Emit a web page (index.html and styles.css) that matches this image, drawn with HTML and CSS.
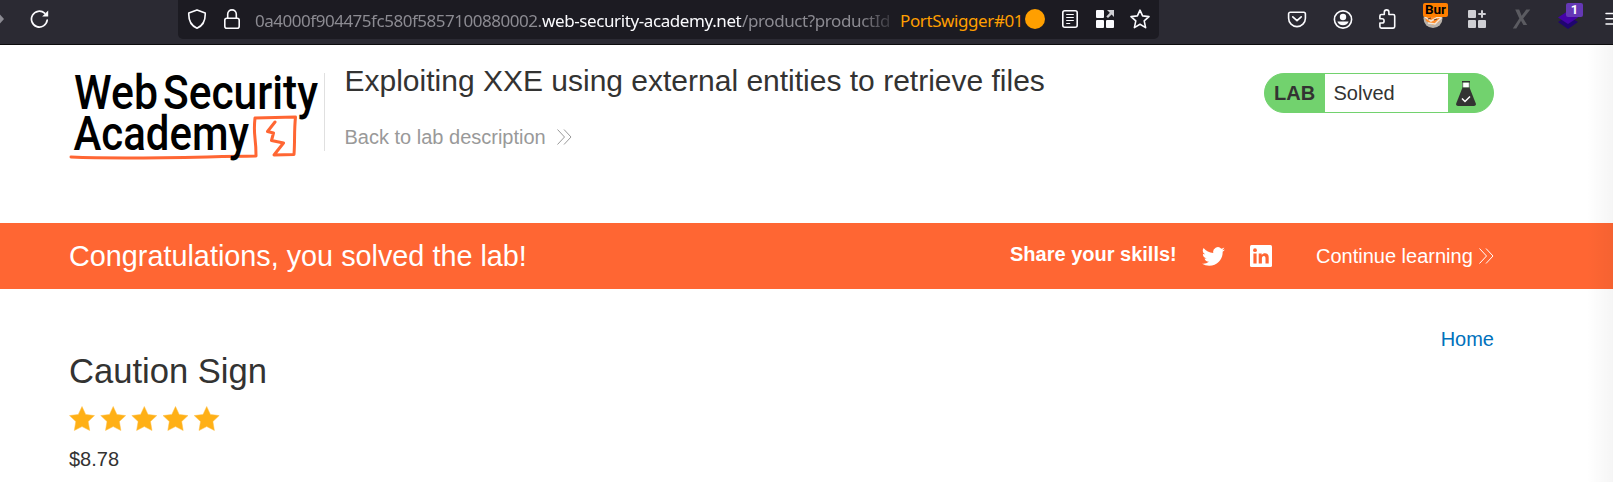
FILE: index.html
```html
<!DOCTYPE html>
<html lang="en">
<head>
<meta charset="utf-8">
<title>Exploiting XXE using external entities to retrieve files</title>
<link rel="stylesheet" href="styles.css">
</head>
<body>
<div class="toolbar">
  <svg class="icon nub" viewBox="0 0 5 20"><path d="M0 5.5L4 10L0 14.5Z" fill="#8b8a92"/></svg>
  <svg class="icon reload" viewBox="0 0 20 20"><path d="M17.2 11.2A7.9 7.9 0 1 1 14.6 4.2" fill="none" stroke="#fbfbfe" stroke-width="1.7" stroke-linecap="round"/><path d="M18.2 1.4V7.4H12.2Z" fill="#fbfbfe"/></svg>
  <div class="urlbar">
    <svg class="icon shield" viewBox="0 0 20 20"><path d="M10 .9L18.2 3.9C18.6 11.500 15.200 17 10 19.200C4.800 17 1.400 11.500 1.800 3.900Z" fill="none" stroke="#fbfbfe" stroke-width="1.600" stroke-linejoin="round"/></svg>
    <svg class="icon lock" viewBox="0 0 20 20"><rect x="2.800" y="9.200" width="14.400" height="10" rx="2" fill="none" stroke="#fbfbfe" stroke-width="1.600"/><path d="M5.700 9V5.200a4.300 4.300 0 0 1 8.600 0V9" fill="none" stroke="#fbfbfe" stroke-width="1.600"/></svg>
    <div class="url"><span class="sub">0a4000f904475fc580f5857100880002.</span><span class="domain">web-security-academy.net</span><span class="path">/product?productId</span></div>
    <span class="container-name">PortSwigger#01</span>
    <span class="container-dot"></span>
    <svg class="icon reader" viewBox="0 0 20 20"><rect x="2.800" y="1.800" width="14.400" height="16.400" rx="2" fill="none" stroke="#fbfbfe" stroke-width="1.600"/><path d="M6.200 5.500h7.600M6.200 8.500h7.600M6.200 11.500h7.600M6.200 14.500h4" stroke="#fbfbfe" stroke-width="1.200"/></svg>
    <svg class="icon apps" viewBox="0 0 20 20"><g fill="#fbfbfe"><rect x="1" y="1" width="8" height="8" rx="1"/><rect x="1" y="11" width="8" height="8" rx="1"/><rect x="11" y="11" width="8" height="8" rx="1"/></g><path d="M12 1H19V8L16.600 5.600L13 9L11.300 7.400L14.800 3.800Z" fill="#cfcfd4"/></svg>
    <svg class="icon bookmark" viewBox="0 0 20 20"><path d="M10 1.200L12.600 6.900L19 7.600L14.200 11.900L15.600 18.600L10 15.300L4.400 18.600L5.800 11.900L1 7.600L7.400 6.900Z" fill="none" stroke="#fbfbfe" stroke-width="1.600" stroke-linejoin="round"/></svg>
  </div>
  <svg class="icon pocket" viewBox="0 0 20 20"><path d="M3.300 3.200h13.400a1.700 1.700 0 0 1 1.700 1.700v4.300a8.400 8.400 0 0 1-16.800 0V4.900a1.700 1.700 0 0 1 1.700-1.700Z" fill="none" stroke="#fbfbfe" stroke-width="1.600"/><path d="M5.800 7.800L10 11.700L14.200 7.800" fill="none" stroke="#fbfbfe" stroke-width="1.700" stroke-linecap="round" stroke-linejoin="round"/></svg>
  <svg class="icon account" viewBox="0 0 20 20"><circle cx="10" cy="10.500" r="8.600" fill="none" stroke="#fbfbfe" stroke-width="1.600"/><circle cx="10" cy="8" r="3.200" fill="#fbfbfe"/><path d="M4.400 12.600H15.600C15 15 12.800 16.200 10 16.200S5 15 4.400 12.600Z" fill="#fbfbfe"/></svg>
  <svg class="icon puzzle" viewBox="0 0 20 20"><path d="M7.300 5.500V3.200a2.300 2.300 0 0 1 4.600 0V5.500H16.200a1.500 1.500 0 0 1 1.500 1.500V17.600a1.500 1.500 0 0 1-1.500 1.500H4.400A1.500 1.500 0 0 1 2.900 17.600V14H5a2.100 2.100 0 0 0 0-4.200H2.900V7A1.500 1.500 0 0 1 4.400 5.500Z" fill="none" stroke="#fbfbfe" stroke-width="1.600" stroke-linejoin="round"/></svg>
  <div class="burp">
    <svg viewBox="0 0 20 20"><circle cx="10" cy="9.500" r="9.500" fill="#b9b2aa"/><path d="M2 6H18L16 13L10 16L3 12Z" fill="#ff8c2a"/><path d="M2 8L8 12L15 8L18 9L12 15L5 14" fill="none" stroke="#f3e6d7" stroke-width="1.500"/><path d="M5 10L8 9M11 11L14 10" stroke="#6a4325" stroke-width="1.300"/></svg>
    <span class="badge bur">Bur</span>
  </div>
  <svg class="icon ext" viewBox="0 0 20 20"><g fill="#cfcfd4"><rect x="1" y="1" width="8" height="8" rx="1"/><rect x="1" y="11" width="8" height="8" rx="1"/><rect x="11" y="11" width="8" height="8" rx="1"/></g><path d="M15 1.300V8.700M11.300 5H18.700" stroke="#cfcfd4" stroke-width="2"/></svg>
  <svg class="icon xext" viewBox="0 0 20 20"><path d="M3.200 .5H7.200L9.600 6.800L14.300 .5H18.300L11.200 9.500L15.200 16H11.400L9 11.800L4.300 19.500H.8L7.300 9.500Z" fill="#5b5b61"/></svg>
  <div class="layers">
    <svg viewBox="0 0 20 17"><path d="M0 10L10 4L20 10L10 17Z" fill="#1f0570"/><path d="M0 5.500L10 -1L20 5.500L10 12Z" fill="#4503a8"/></svg>
    <span class="badge count">1</span>
  </div>
  <svg class="icon menu" viewBox="0 0 9 20"><path d="M1 4.500H9M1 9.700H9M1 15H9" stroke="#fbfbfe" stroke-width="1.500" stroke-linecap="round"/></svg>
</div>

<div class="page">
  <header class="lab-header">
    <svg class="logo" viewBox="0 0 256 96" width="256" height="96">
      <g class="logo-text">
        <text x="5" y="43" textLength="84" lengthAdjust="spacingAndGlyphs">Web</text>
        <text x="94" y="43" textLength="155" lengthAdjust="spacingAndGlyphs">Security</text>
      </g>
      <path d="M2 91C60 93.500 120 91 187 90L187 89C187 70 184 70 186 52L226.500 51C225 65 226 75 225 88.500L205 89L214.500 77L202.500 74.500L204.500 67L198.500 65.500L206 56" fill="none" stroke="#ff6633" stroke-width="3" stroke-linejoin="round" stroke-linecap="round"/>
      <text class="logo-text" x="4.500" y="84" textLength="175.500" lengthAdjust="spacingAndGlyphs">Academy</text>
    </svg>
    <div class="title-block">
      <h2>Exploiting XXE using external entities to retrieve files</h2>
      <a class="back">Back to lab description <svg class="chev" viewBox="0 0 15 16"><path d="M.5 .5L7.500 8L.5 15.500M7 .5L14 8L7 15.500" fill="none" stroke="currentColor"/></svg></a>
    </div>
    <div class="status">
      <span class="lab">LAB</span>
      <span class="solved">Solved</span>
      <svg class="flask" viewBox="0 0 20 25"><path d="M6.500 1.500V6.500H13.500V1.500Z" fill="#fff"/><path d="M6 .7H14" stroke="#333332" stroke-width="1.400"/><path d="M6.700 1V7M13.300 1V7" stroke="#333332" stroke-width=".7"/><path d="M6.500 6.500H13.500L19.800 22.500Q20.200 25 18 25H2Q-.2 25 .2 22.500Z" fill="#333332"/><path d="M6 17.500L9 20.500L14 15.500" fill="none" stroke="#fff" stroke-width="1.500"/></svg>
    </div>
  </header>

  <section class="banner">
    <span class="congrats">Congratulations, you solved the lab!</span>
    <span class="share">Share your skills!</span>
    <svg class="twitter" viewBox="0 0 24 24"><path fill="#fff" d="M23.950 4.570a10 10 0 0 1-2.820.780 4.960 4.960 0 0 0 2.160-2.730c-.950.560-2 .960-3.130 1.190a4.920 4.920 0 0 0-8.380 4.480C7.690 8.090 4.070 6.130 1.640 3.160a4.900 4.900 0 0 0 1.520 6.570 4.900 4.900 0 0 1-2.230-.610v.060a4.920 4.920 0 0 0 3.950 4.830 5 5 0 0 1-2.210.080 4.940 4.940 0 0 0 4.600 3.420A9.870 9.870 0 0 1 0 19.540a13.990 13.990 0 0 0 7.550 2.210c9.050 0 14-7.500 14-13.980 0-.210 0-.420-.020-.630a9.940 9.940 0 0 0 2.420-2.570Z"/></svg>
    <svg class="linkedin" viewBox="0 0 22 22"><rect width="22" height="22" rx="1.500" fill="#fff"/><g fill="#ff6633"><circle cx="5" cy="5.200" r="1.900"/><path d="M3.400 8.500H6.600V18.500H3.400ZM8.700 8.500H11.700V9.900C12.500 8.700 13.600 8.200 15 8.200C17.800 8.200 18.700 10 18.700 12.700V18.500H15.500V13.300C15.500 11.800 15.200 10.900 13.900 10.900C12.500 10.900 11.900 11.900 11.900 13.300V18.500H8.700Z"/></g></svg>
    <a class="continue">Continue learning <svg class="chev" viewBox="0 0 15 16"><path d="M.5 .5L7.500 8L.5 15.500M7 .5L14 8L7 15.500" fill="none" stroke="currentColor"/></svg></a>
  </section>

  <main class="product">
    <nav><a>Home</a></nav>
    <h3>Caution Sign</h3>
    <svg class="stars" viewBox="0 0 152 26">
      <defs><path id="star" d="M13 .5L16.700 8.400L25.500 9.600L19.200 15.500L20.700 24.500L13 20.600L5.300 24.500L6.800 15.500L.5 9.600L9.300 8.400Z" fill="#ffb016" stroke="#ffc14a" stroke-width=".5"/></defs>
      <use href="#star"/><use href="#star" x="31.200"/><use href="#star" x="62.300"/><use href="#star" x="93.500"/><use href="#star" x="124.700"/>
    </svg>
    <p class="price">$8.78</p>
  </main>
  <div class="edge"></div>
</div>
</body>
</html>
```
FILE: styles.css
```css
* { box-sizing: border-box; }
body {
  margin: 0;
  height: 482px;
  overflow: hidden;
  background: #fff;
  color: #333332;
  font-family: "Liberation Sans", Arial, sans-serif;
}
svg { display: block; flex: none; }

.toolbar {
  display: flex;
  height: 45px;
  background: #2b2a33;
  border-bottom: 1px solid #0c0c0d;
  color: #fbfbfe;
  overflow: hidden;
}
.icon { width: 20px; height: 20px; margin-top: 9px; }
.nub { width: 5px; }
.reload { margin-left: 25px; }
.urlbar {
  display: flex;
  flex: none;
  width: 981px;
  height: 39px;
  margin-left: 128px;
  background: #1c1b22;
  border-radius: 0 0 5px 5px;
  font: 17px/39px "Noto Sans", sans-serif;
  white-space: nowrap;
}
.shield { margin-left: 9px; }
.lock { margin-left: 15px; }
.url {
  flex: none;
  display: flex;
  width: 638px;
  margin-left: 13px;
  padding-top: 1px;
  color: #8c8b92;
  -webkit-mask-image: linear-gradient(to right, #000 605px, transparent 645px);
  mask-image: linear-gradient(to right, #000 605px, transparent 645px);
}
.url span { flex: none; }
.sub { width: 287px; letter-spacing: -0.48px; }
.domain { width: 200px; color: #fbfbfe; letter-spacing: -0.4px; }
.path { letter-spacing: -0.4px; }
.container-name {
  flex: none;
  width: 119px;
  margin-left: 7px;
  padding-top: 1px;
  color: #ff9f00;
  letter-spacing: -0.4px;
}
.container-dot {
  flex: none;
  width: 20px;
  height: 20px;
  margin: 9px 0 0 6px;
  border-radius: 50%;
  background: #ff9f00;
}
.reader { margin-left: 15px; }
.apps { margin-left: 15px; }
.bookmark { margin-left: 15px; }
.pocket { margin-left: 128px; }
.account { margin-left: 26px; }
.puzzle { margin-left: 24px; }
.burp { position: relative; flex: none; width: 25px; margin-left: 26px; }
.burp svg { width: 20px; height: 20px; margin-top: 9px; }
.badge {
  position: absolute;
  top: 3px;
  height: 14px;
  border-radius: 2px;
  font: bold 13px/13px Roboto, sans-serif;
  text-align: center;
}
.bur { left: 0; width: 25px; background: #ff7f00; color: #000; font-size: 13.5px; }
.ext { margin-left: 19px; }
.xext { margin-left: 25px; }
.layers { position: relative; flex: none; width: 25px; margin-left: 26px; }
.layers svg { width: 20px; height: 17px; margin-top: 12px; }
.count { left: 8px; width: 17px; background: #6538b5; color: #fff; }
.menu { width: 9px; margin-left: 22px; }

.page { position: relative; height: 437px; }
.lab-header { display: flex; height: 178px; padding: 20px 0 0 69px; }
.logo { margin-top: 1px; overflow: visible; }
.logo-text { font: 500 47.500px Roboto, sans-serif; fill: #000; }
.title-block {
  width: 920px;
  height: 78px;
  margin: 8px 0 0 -1px;
  padding-left: 19.5px;
  border-left: 1px solid #e0e0e0;
}
h2 { margin: -10px 0 0; font-size: 30px; line-height: 36px; font-weight: 400; white-space: nowrap; }
.back { display: flex; align-items: center; margin-top: 26px; color: #999; font-size: 20px; line-height: 24px; }
.chev { width: 15px; height: 16px; }
.back .chev { margin-left: 11px; }
.status {
  display: flex;
  width: 230px;
  height: 40px;
  margin: 8px 0 0 20px;
  border: 1px solid #72d26e;
  border-radius: 20px;
  background: #72d26e;
  font-size: 20px;
  line-height: 39px;
}
.lab { width: 60px; padding-left: 9px; font-weight: 700; }
.solved { width: 123px; padding-left: 8.5px; background: #fff; }
.flask { width: 20px; height: 25px; margin: 7px 0 0 8px; }

.banner {
  display: flex;
  align-items: center;
  height: 66px;
  padding-left: 69px;
  background: #ff6633;
  color: #fff;
  font-size: 20px;
  white-space: nowrap;
}
.congrats { width: 941px; font-size: 28.8px; }
.share { width: 192px; margin-top: -4px; font-weight: 700; }
.twitter { width: 23px; height: 23px; }
.linkedin { width: 22px; height: 22px; margin-left: 25px; }
.continue { display: flex; align-items: center; width: 178px; margin-left: 44px; justify-content: space-between; }

.product { width: 1494px; padding: 38px 0 0 69px; }
nav { height: 24px; text-align: right; color: #0071bc; font-size: 20px; line-height: 24px; }
h3 { margin: 0; font-size: 34.600px; font-weight: 400; line-height: 40px; }
.stars { width: 152px; height: 26px; margin-top: 15px; }
.price { margin: 15px 0 0; font-size: 20px; line-height: 24px; }
.edge {
  position: absolute;
  top: 0;
  right: 0;
  bottom: 0;
  width: 26px;
  background: linear-gradient(to right, rgba(0,0,0,0), rgba(0,0,0,.04));
}
```
